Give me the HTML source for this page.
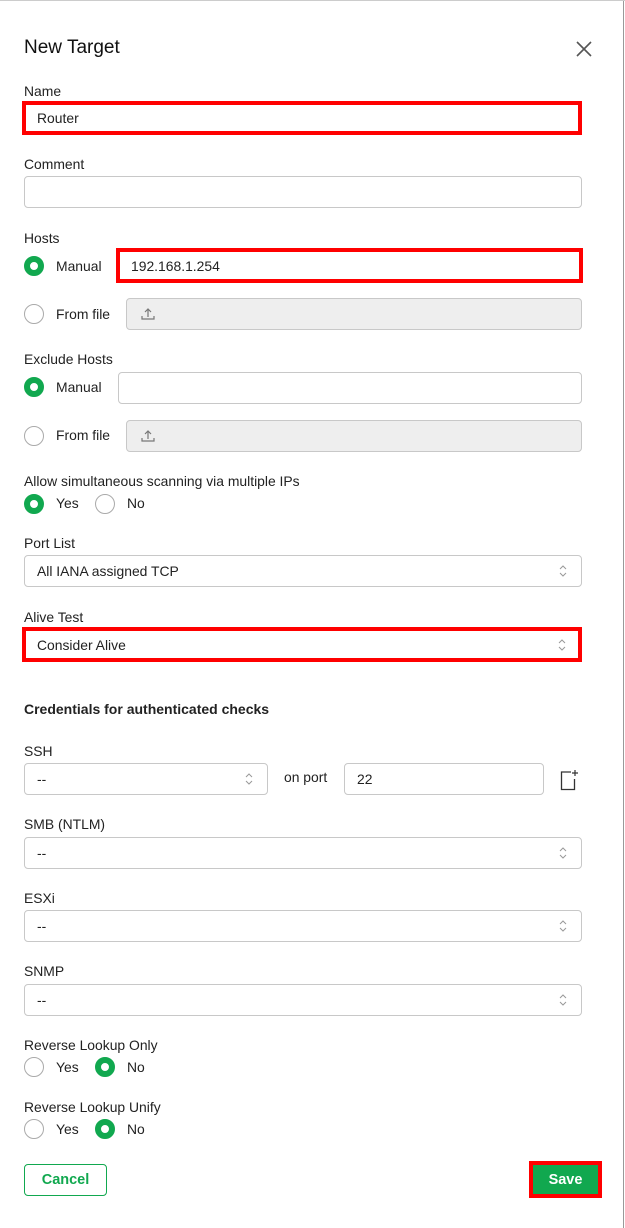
<!DOCTYPE html>
<html><head><meta charset="utf-8"><style>
*{box-sizing:border-box;margin:0;padding:0}
body{width:625px;height:1228px;background:#fff;font-family:"Liberation Sans",sans-serif;font-size:13.9px;color:#222;position:relative;overflow:hidden}
.a{position:absolute;white-space:nowrap}
.l{position:absolute;left:24px;line-height:16px;white-space:nowrap;margin-top:1px}
.in{position:absolute;border:1px solid #c8c8c8;border-radius:4px;background:#fff}
.in span{position:absolute;left:12px;top:50%;transform:translateY(-50%)}
.red{position:absolute;border:4px solid #f00;background:#fff}
.red span{position:absolute;left:11px;top:50%;transform:translateY(-50%)}
.gray{background:#eee}
.r{position:absolute;width:20px;height:20px;border-radius:50%;border:1px solid #aaa;background:#fff}
.r.on{border:6px solid #11a84f}
.ch{position:absolute;right:14px;top:50%;transform:translateY(-50%)}
</style></head><body>
<div class="a" style="right:1px;top:0;width:1px;height:1228px;background:#999"></div>
<div class="a" style="left:0;top:0;width:625px;height:1px;background:#ccc"></div>
<div class="a" style="left:24px;top:37px;font-size:19px;color:#111">New Target</div>
<svg class="a" style="left:576px;top:41px" width="16" height="16"><path d="M1 1L15 15M15 1L1 15" stroke="#555" stroke-width="1.6"/></svg>

<div class="l" style="top:82px">Name</div>
<div class="red" style="left:22px;top:101px;width:560px;height:34px"><span>Router</span></div>

<div class="l" style="top:155px">Comment</div>
<div class="in" style="left:24px;top:176px;width:558px;height:32px"></div>

<div class="l" style="top:229px">Hosts</div>
<div class="r on" style="left:24px;top:256px"></div>
<div class="a" style="left:56px;top:258px">Manual</div>
<div class="red" style="left:116px;top:248px;width:467px;height:35px"><span>192.168.1.254</span></div>
<div class="r" style="left:24px;top:304px"></div>
<div class="a" style="left:56px;top:306px">From file</div>
<div class="in gray" style="left:126px;top:298px;width:456px;height:32px"><svg class="a" style="left:14px;top:8px" width="14" height="14"><path d="M7 10V2M4 5L7 2L10 5M1 9V12H13V9" fill="none" stroke="#777" stroke-width="1.2"/></svg></div>

<div class="l" style="top:350px">Exclude Hosts</div>
<div class="r on" style="left:24px;top:377px"></div>
<div class="a" style="left:56px;top:379px">Manual</div>
<div class="in" style="left:118px;top:372px;width:464px;height:32px"></div>
<div class="r" style="left:24px;top:426px"></div>
<div class="a" style="left:56px;top:427px">From file</div>
<div class="in gray" style="left:126px;top:420px;width:456px;height:32px"><svg class="a" style="left:14px;top:8px" width="14" height="14"><path d="M7 10V2M4 5L7 2L10 5M1 9V12H13V9" fill="none" stroke="#777" stroke-width="1.2"/></svg></div>

<div class="l" style="top:472px">Allow simultaneous scanning via multiple IPs</div>
<div class="r on" style="left:24px;top:494px"></div>
<div class="a" style="left:56px;top:495px">Yes</div>
<div class="r" style="left:95px;top:494px"></div>
<div class="a" style="left:127px;top:495px">No</div>

<div class="l" style="top:534px">Port List</div>
<div class="in" style="left:24px;top:555px;width:558px;height:32px"><span>All IANA assigned TCP</span><svg class="ch" width="8" height="14"><path d="M1 5L4 2L7 5M1 9L4 12L7 9" fill="none" stroke="#999"/></svg></div>

<div class="l" style="top:608px">Alive Test</div>
<div class="red" style="left:22px;top:627px;width:560px;height:35px"><span>Consider Alive</span><svg class="ch" width="8" height="14" style="right:12px"><path d="M1 5L4 2L7 5M1 9L4 12L7 9" fill="none" stroke="#999"/></svg></div>

<div class="l" style="top:700px;font-weight:bold;font-size:14px">Credentials for authenticated checks</div>

<div class="l" style="top:742px">SSH</div>
<div class="in" style="left:24px;top:763px;width:244px;height:32px"><span>--</span><svg class="ch" width="8" height="14"><path d="M1 5L4 2L7 5M1 9L4 12L7 9" fill="none" stroke="#999"/></svg></div>
<div class="a" style="left:284px;top:769px">on port</div>
<div class="in" style="left:344px;top:763px;width:200px;height:32px"><span>22</span></div>
<svg class="a" style="left:560px;top:769px" width="20" height="22"><path d="M11 3H1.5V20.5H14.5V10" fill="none" stroke="#333" stroke-width="1.3"/><path d="M15 1V7M12 4H18" stroke="#333" stroke-width="1.2"/></svg>

<div class="l" style="top:815px">SMB (NTLM)</div>
<div class="in" style="left:24px;top:837px;width:558px;height:32px"><span>--</span><svg class="ch" width="8" height="14"><path d="M1 5L4 2L7 5M1 9L4 12L7 9" fill="none" stroke="#999"/></svg></div>

<div class="l" style="top:889px">ESXi</div>
<div class="in" style="left:24px;top:910px;width:558px;height:32px"><span>--</span><svg class="ch" width="8" height="14"><path d="M1 5L4 2L7 5M1 9L4 12L7 9" fill="none" stroke="#999"/></svg></div>

<div class="l" style="top:962px">SNMP</div>
<div class="in" style="left:24px;top:984px;width:558px;height:32px"><span>--</span><svg class="ch" width="8" height="14"><path d="M1 5L4 2L7 5M1 9L4 12L7 9" fill="none" stroke="#999"/></svg></div>

<div class="l" style="top:1036px">Reverse Lookup Only</div>
<div class="r" style="left:24px;top:1057px"></div>
<div class="a" style="left:56px;top:1059px">Yes</div>
<div class="r on" style="left:95px;top:1057px"></div>
<div class="a" style="left:127px;top:1059px">No</div>

<div class="l" style="top:1098px">Reverse Lookup Unify</div>
<div class="r" style="left:24px;top:1119px"></div>
<div class="a" style="left:56px;top:1121px">Yes</div>
<div class="r on" style="left:95px;top:1119px"></div>
<div class="a" style="left:127px;top:1121px">No</div>

<div class="a" style="left:24px;top:1164px;width:83px;height:32px;border:1px solid #11a84f;border-radius:4px;color:#11a84f;font-weight:bold;font-size:14.5px;text-align:center;line-height:31px">Cancel</div>
<div class="a" style="left:529px;top:1161px;width:73px;height:37px;border:4px solid #f00;background:#11a84f;color:#fff;font-weight:bold;font-size:14.5px;text-align:center;line-height:31px">Save</div>
</body></html>
